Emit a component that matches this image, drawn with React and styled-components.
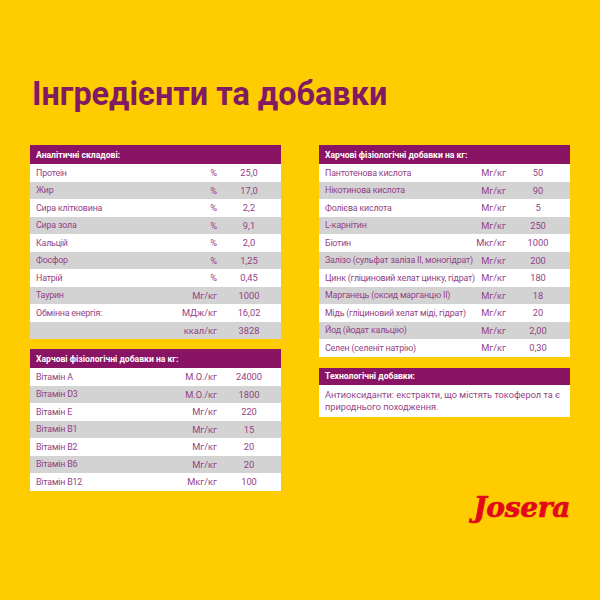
import React from "react";
import styled, { createGlobalStyle } from "styled-components";

const Global = createGlobalStyle`
  html, body { margin: 0; padding: 0; }
  body { background: #ffcc00; font-family: Roboto, "Noto Sans", sans-serif; }
`;

const Page = styled.div`
  width: 600px;
  height: 600px;
  background: #ffcc00;
  display: flex;
  flex-direction: column;
  box-sizing: border-box;
  overflow: hidden;
`;

const Title = styled.h1`
  margin: 75px 0 0 32px;
  font-family: Roboto, sans-serif;
  font-weight: 700;
  font-size: 32.4px;
  line-height: 38px;
  color: #7f1a63;
`;

const Columns = styled.div`
  margin: 32px 0 0 30px;
  display: grid;
  grid-template-columns: 251px 251px;
  column-gap: 38px;
  align-items: start;
`;

const Stack = styled.div`
  display: flex;
  flex-direction: column;
  gap: ${(p) => p.$gap}px;
`;

const Table = styled.div`
  display: flex;
  flex-direction: column;
  background: #ffffff;
`;

const Header = styled.div`
  height: ${(p) => p.$h || 19}px;
  background: #8a1464;
  color: #ffffff;
  font-weight: 700;
  font-size: 8.6px;
  display: flex;
  align-items: center;
  padding-left: 6px;
`;

const Row = styled.div`
  height: 17.5px;
  display: grid;
  grid-template-columns: minmax(0, 1fr) 50px 64px;
  align-items: center;
  background: ${(p) => (p.$alt ? "#d3d3d3" : "#ffffff")};
  color: #933f86;
  font-size: 9.3px;
  font-weight: 400;
`;

const Label = styled.span`
  padding-left: 6px;
  white-space: nowrap;
  font-size: 8.9px;
  letter-spacing: -0.2px;
`;

const Unit = styled.span`
  text-align: right;
`;

const Value = styled.span`
  text-align: center;
`;

const Body = styled.div`
  padding: 4px 6px 4px 6px;
  color: #933f86;
  font-size: 9.2px;
  line-height: 12px;
`;

const Footer = styled.div`
  display: flex;
  justify-content: flex-end;
  padding-right: 30px;
  margin-top: 1px;
`;

const Logo = styled.div`
  font-family: "DejaVu Serif", serif;
  font-style: italic;
  font-weight: 700;
  font-size: 28px;
  line-height: 32px;
  color: #e2081c;
  letter-spacing: -0.3px;
  -webkit-text-stroke: 0.7px #e2081c;
`;

const analytic = [
  ["Протеін", "%", "25,0"],
  ["Жир", "%", "17,0"],
  ["Сира клітковина", "%", "2,2"],
  ["Сира зола", "%", "9,1"],
  ["Кальцій", "%", "2,0"],
  ["Фосфор", "%", "1,25"],
  ["Натрій", "%", "0,45"],
  ["Таурин", "Мг/кг", "1000"],
  ["Обмінна енергія:", "МДж/кг", "16,02"],
  ["", "ккал/кг", "3828"],
];

const vitamins = [
  ["Вітамін A", "М.О./кг", "24000"],
  ["Вітамін D3", "М.О./кг", "1800"],
  ["Вітамін E", "Мг/кг", "220"],
  ["Вітамін B1", "Мг/кг", "15"],
  ["Вітамін B2", "Мг/кг", "20"],
  ["Вітамін B6", "Мг/кг", "20"],
  ["Вітамін B12", "Мкг/кг", "100"],
];

const additives = [
  ["Пантотенова кислота", "Мг/кг", "50"],
  ["Нікотинова кислота", "Мг/кг", "90"],
  ["Фолієва кислота", "Мг/кг", "5"],
  ["L-карнітин", "Мг/кг", "250"],
  ["Біотин", "Мкг/кг", "1000"],
  ["Залізо (сульфат заліза II, моногідрат)", "Мг/кг", "200"],
  ["Цинк (гліциновий хелат цинку, гідрат)", "Мг/кг", "180"],
  ["Марганець (оксид марганцю II)", "Мг/кг", "18"],
  ["Мідь (гліциновий хелат міді, гідрат)", "Мг/кг", "20"],
  ["Йод (йодат кальцію)", "Мг/кг", "2,00"],
  ["Селен (селеніт натрію)", "Мг/кг", "0,30"],
];

function DataTable({ title, rows }) {
  return (
    <Table>
      <Header>{title}</Header>
      {rows.map(([l, u, v], i) => (
        <Row key={i} $alt={i % 2 === 1}>
          <Label>{l}</Label>
          <Unit>{u}</Unit>
          <Value>{v}</Value>
        </Row>
      ))}
    </Table>
  );
}

export default function App() {
  return (
    <Page>
      <Global />
      <Title>Інгредієнти та добавки</Title>
      <Columns>
        <Stack $gap={10}>
          <DataTable title="Аналітичні складові:" rows={analytic} />
          <DataTable title="Харчові фізіологічні добавки на кг:" rows={vitamins} />
        </Stack>
        <Stack $gap={11}>
          <DataTable title="Харчові фізіологічні добавки на кг:" rows={additives} />
          <Table>
            <Header $h={17}>Технологічні добавки:</Header>
            <Body>
              Антиоксиданти: екстракти, що містять токоферол та є природнього
              походження.
            </Body>
          </Table>
        </Stack>
      </Columns>
      <Footer>
        <Logo>Josera</Logo>
      </Footer>
    </Page>
  );
}
